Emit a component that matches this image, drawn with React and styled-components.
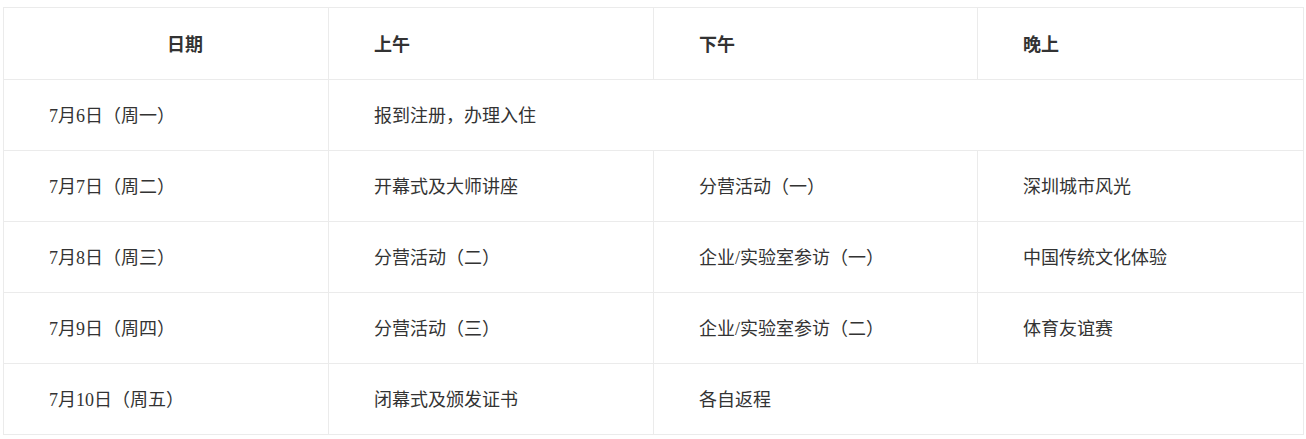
import React from "react";
import styled, { createGlobalStyle } from "styled-components";

const Global = createGlobalStyle`
  html, body { margin: 0; padding: 0; background: #fff; }
  body {
    font-family: "Liberation Serif", "Noto Sans CJK SC", serif;
    color: #333;
  }
`;

const Page = styled.div`
  padding: 7px 4px 0 3px;
`;

const Table = styled.table`
  width: 1300px;
  border-collapse: collapse;
  table-layout: fixed;
  font-size: 18px;
`;

const HeadCell = styled.th`
  height: 70px;
  padding: 0 0 1px ${(p) => (p.$center ? 38 : 45)}px;
  border: 1px solid #ebebeb;
  text-align: ${(p) => (p.$center ? "center" : "left")};
  font-weight: bold;
  font-size: 18px;
  font-family: "Noto Sans CJK SC", sans-serif;
  color: #333;
`;

const Cell = styled.td`
  height: 67px;
  padding: 0 0 3px 45px;
  border: 1px solid #ebebeb;
  text-align: left;
  vertical-align: middle;
  color: #333;
`;

const rows = [
  { date: "7月6日（周一）", cells: [{ t: "报到注册，办理入住", span: 3 }] },
  {
    date: "7月7日（周二）",
    cells: [{ t: "开幕式及大师讲座" }, { t: "分营活动（一）" }, { t: "深圳城市风光" }],
  },
  {
    date: "7月8日（周三）",
    cells: [{ t: "分营活动（二）" }, { t: "企业/实验室参访（一）" }, { t: "中国传统文化体验" }],
  },
  {
    date: "7月9日（周四）",
    cells: [{ t: "分营活动（三）" }, { t: "企业/实验室参访（二）" }, { t: "体育友谊赛" }],
  },
  {
    date: "7月10日（周五）",
    cells: [{ t: "闭幕式及颁发证书" }, { t: "各自返程", span: 2 }],
  },
];

export default function App() {
  return (
    <Page>
      <Global />
      <Table>
        <colgroup>
          <col style={{ width: "325px" }} />
          <col style={{ width: "325px" }} />
          <col style={{ width: "324px" }} />
          <col style={{ width: "326px" }} />
        </colgroup>
        <thead>
          <tr>
            <HeadCell $center>日期</HeadCell>
            <HeadCell>上午</HeadCell>
            <HeadCell>下午</HeadCell>
            <HeadCell>晚上</HeadCell>
          </tr>
        </thead>
        <tbody>
          {rows.map((r) => (
            <tr key={r.date}>
              <Cell>{r.date}</Cell>
              {r.cells.map((c, i) => (
                <Cell key={i} colSpan={c.span || 1}>
                  {c.t}
                </Cell>
              ))}
            </tr>
          ))}
        </tbody>
      </Table>
    </Page>
  );
}
